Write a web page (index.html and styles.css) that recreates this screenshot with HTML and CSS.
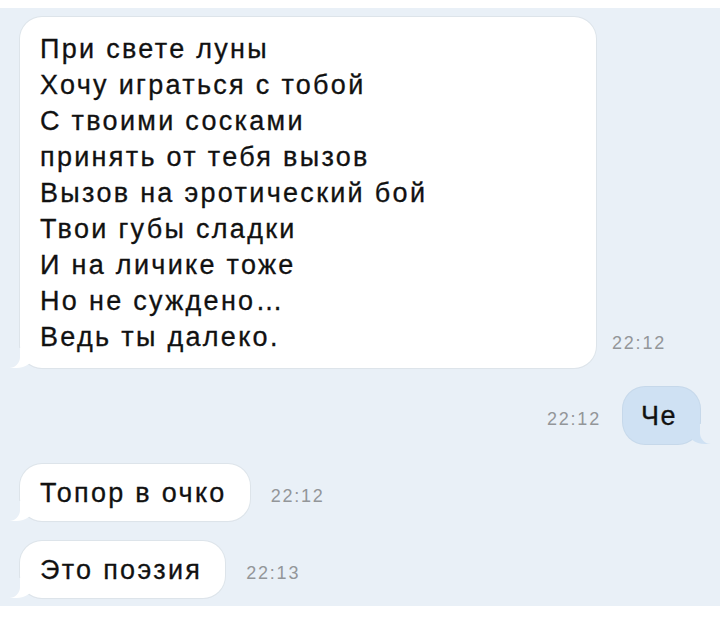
FILE: index.html
```html
<!DOCTYPE html>
<html lang="ru">
<head>
<meta charset="utf-8">
<title>Чат</title>
<link rel="stylesheet" href="styles.css">
</head>
<body>
<div class="chat">
  <div class="row row-in">
    <div class="bubble in big">
      При свете луны<br>
      Хочу играться с тобой<br>
      С твоими сосками<br>
      принять от тебя вызов<br>
      Вызов на эротический бой<br>
      Твои губы сладки<br>
      И на личике тоже<br>
      Но не суждено…<br>
      Ведь ты далеко.
    </div>
    <span class="time time-big">22:12</span>
  </div>
  <div class="row row-out">
    <span class="time">22:12</span>
    <div class="bubble out">Че</div>
  </div>
  <div class="row row-in">
    <div class="bubble in">Топор в очко</div>
    <span class="time">22:12</span>
  </div>
  <div class="row row-in">
    <div class="bubble in">Это поэзия</div>
    <span class="time">22:13</span>
  </div>
</div>
</body>
</html>
```
FILE: styles.css
```css
html, body {
  margin: 0;
  padding: 0;
  background: #ffffff;
}

body {
  width: 720px;
  height: 618px;
  overflow: hidden;
  padding-top: 8px;
  box-sizing: border-box;
}

.chat {
  height: 598px;
  box-sizing: border-box;
  background: #e9f0f7;
  padding: 9px 20px 0 20px;
  display: flex;
  flex-direction: column;
  gap: 20px;
  font-family: "Liberation Sans", Arial, sans-serif;
}

.row {
  display: flex;
  align-items: flex-end;
}

.row-in {
  justify-content: flex-start;
  gap: 21px;
}

.row-out {
  justify-content: flex-end;
  gap: 22px;
  margin-top: -1px;
}

.bubble {
  position: relative;
  background: #ffffff;
  color: #111111;
  border-radius: 22px;
  padding: 11px 23px 10px 20px;
  font-size: 27px;
  line-height: 36px;
  letter-spacing: 2.3px;
  white-space: nowrap;
  -webkit-text-stroke: 0.3px #111111;
  box-shadow: 0 0 0 1px #dde4ea, 0 1px 1px rgba(0, 0, 0, 0.04);
}

.bubble.big {
  width: 576px;
  box-sizing: border-box;
  padding: 14px 20px 13px 20px;
}

.bubble::before,
.bubble::after {
  content: "";
  position: absolute;
  bottom: 0;
  height: 20px;
}

.in::before {
  left: -10px;
  width: 24px;
  background: #ffffff;
  border-bottom-right-radius: 18px 14px;
}

.in::after {
  left: -26px;
  width: 26px;
  background: #e9f0f7;
  border-bottom-right-radius: 11px;
}

.out {
  background: #cfe1f3;
  box-shadow: 0 0 0 1px #c6d8ea;
  padding: 11px 23px 10px 18px;
  letter-spacing: 1.5px;
}

.out::before {
  right: -11px;
  width: 24px;
  background: #cfe1f3;
  border-bottom-left-radius: 18px 14px;
}

.out::after {
  right: -26px;
  width: 26px;
  background: #e9f0f7;
  border-bottom-left-radius: 11px;
}

.time {
  font-size: 18px;
  line-height: 18px;
  letter-spacing: 1.8px;
  color: #939699;
  margin-bottom: 16px;
}

.time-big {
  margin-left: -5px;
}
```
